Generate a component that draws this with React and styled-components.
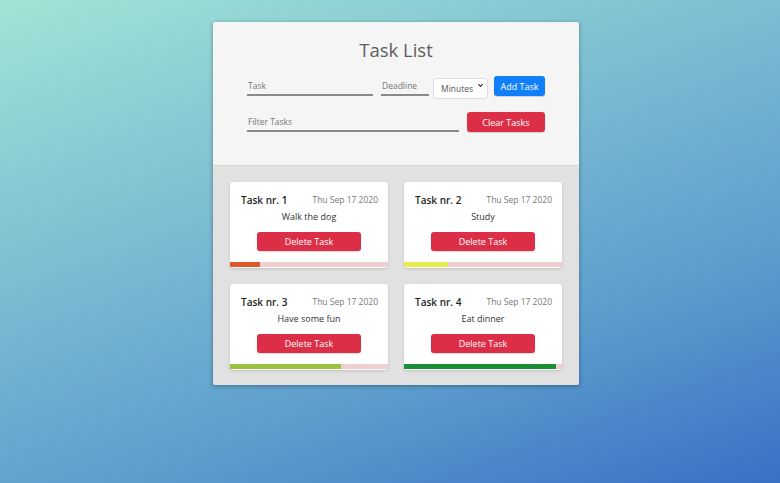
import styled, { createGlobalStyle } from "styled-components";

const GlobalStyle = createGlobalStyle`
  html, body {
    margin: 0;
    height: 100%;
  }
  body {
    font-family: "Open Sans", "Noto Sans", sans-serif;
    background: linear-gradient(160deg, #a2e4d6 0%, #7ec0d2 35%, #5b9ccd 70%, #3a70c5 100%);
    background-attachment: fixed;
  }
`;

const tasks = [
  { id: 1, text: "Walk the dog", date: "Thu Sep 17 2020", progress: 19, color: "#df5a2a" },
  { id: 2, text: "Study", date: "Thu Sep 17 2020", progress: 28, color: "#e8ea4f" },
  { id: 3, text: "Have some fun", date: "Thu Sep 17 2020", progress: 70, color: "#9bc341" },
  { id: 4, text: "Eat dinner", date: "Thu Sep 17 2020", progress: 96, color: "#1a8f35" },
];

const App = () => {
  return (
    <Page>
      <GlobalStyle />
      <Panel>
        <Header>
          <Title>Task List</Title>
          <Row>
            <Field placeholder="Task" $width={126} />
            <Field placeholder="Deadline" $width={48} $ml={8} />
            <SelectWrap>
              <Select defaultValue="Minutes">
                <option>Minutes</option>
                <option>Hours</option>
                <option>Days</option>
              </Select>
              <Chevron viewBox="0 0 8 8">
                <path d="M1.5 2.5 L4 5 L6.5 2.5" fill="none" stroke="#333" strokeWidth="1.4" />
              </Chevron>
            </SelectWrap>
            <Button $variant="blue" $width={51} $ml={6}>Add Task</Button>
          </Row>
          <Row>
            <Field placeholder="Filter Tasks" $width={212} />
            <Button $variant="red" $width={78} $ml={8}>Clear Tasks</Button>
          </Row>
        </Header>
        <List>
          {tasks.map((t) => (
            <Card key={t.id}>
              <CardHead>
                <CardTitle>Task nr. {t.id}</CardTitle>
                <CardDate>{t.date}</CardDate>
              </CardHead>
              <CardText>{t.text}</CardText>
              <Button $variant="red" $width={104} $center>Delete Task</Button>
              <Progress>
                <Fill style={{ width: `${t.progress}%` }} $color={t.color} />
              </Progress>
            </Card>
          ))}
        </List>
      </Panel>
    </Page>
  );
};

export default App;

const Page = styled.div`
  min-height: 100vh;
  box-sizing: border-box;
  padding: 22px 0 0 12px;
  display: flex;
  justify-content: center;
  align-items: flex-start;
`;
const Panel = styled.div`
  width: 366px;
  border-radius: 2px;
  overflow: hidden;
  box-shadow: 0 1px 4px rgba(0, 0, 0, 0.35);
`;
const Header = styled.div`
  background: #f5f5f5;
  padding: 14px 34px 33px;
  display: flex;
  flex-direction: column;
  gap: 16px;
  border-bottom: 1px solid #d6d6d6;
`;
const Title = styled.h1`
  margin: 0 0 -4px;
  text-align: center;
  font-size: 18.5px;
  line-height: 27px;
  font-weight: 500;
  color: #5e5e5e;
`;
const Row = styled.div`
  display: flex;
  align-items: flex-end;
`;
const Field = styled.input`
  width: ${(p) => p.$width}px;
  margin-left: ${(p) => p.$ml || 0}px;
  box-sizing: border-box;
  border: none;
  border-bottom: 2px solid #8a8a8a;
  background: transparent;
  font-family: inherit;
  font-size: 8.5px;
  padding: 3px 1px 3px;
  height: 20px;
  outline: none;
  &::placeholder {
    color: #777;
  }
`;
const SelectWrap = styled.div`
  position: relative;
  margin-left: 4px;
  width: 55px;
  height: 21px;
`;
const Select = styled.select`
  appearance: none;
  width: 100%;
  height: 100%;
  box-sizing: border-box;
  border: 1px solid #ddd;
  border-radius: 3px;
  background: #fff;
  font-family: inherit;
  font-size: 8.5px;
  color: #555;
  padding: 0 0 0 7px;
  outline: none;
`;
const Chevron = styled.svg`
  position: absolute;
  right: 4px;
  top: 7px;
  width: 7px;
  height: 7px;
  pointer-events: none;
`;
const Button = styled.button`
  width: ${(p) => p.$width}px;
  height: ${(p) => (p.$center ? 19 : 20)}px;
  margin-left: ${(p) => p.$ml || 0}px;
  ${(p) => p.$center && "display: block; margin: 8px auto 0;"}
  box-sizing: border-box;
  border: none;
  border-radius: 3px;
  background: ${(p) => (p.$variant === "blue" ? "#127ffa" : "#dc2f47")};
  box-shadow: 0 1px 1px rgba(0, 0, 0, 0.15);
  color: #fff;
  font-family: inherit;
  font-size: 9px;
  padding: 0;
  cursor: pointer;
`;
const List = styled.div`
  background: #e1e1e1;
  padding: 16px 17px 15px;
  display: grid;
  grid-template-columns: 158px 158px;
  gap: 16px;
`;
const Card = styled.div`
  background: #fff;
  border-radius: 3px;
  box-shadow: 0 1px 3px rgba(0, 0, 0, 0.15);
  padding: 10px 10px 1px;
`;
const CardHead = styled.div`
  display: flex;
  justify-content: space-between;
  align-items: center;
  height: 14px;
`;
const CardTitle = styled.span`
  font-size: 10px;
  font-weight: 600;
  color: #1e1e1e;
  padding-left: 1px;
  margin-top: 2px;
`;
const CardDate = styled.span`
  font-size: 8.5px;
  color: #777;
`;
const CardText = styled.div`
  margin-top: 4px;
  line-height: 14px;
  font-size: 9px;
  color: #333;
  text-align: center;
`;
const Progress = styled.div`
  margin: 11px -10px 0;
  height: 5px;
  background: #f0cfd1;
`;
const Fill = styled.div`
  height: 100%;
  background: ${(p) => p.$color};
`;
